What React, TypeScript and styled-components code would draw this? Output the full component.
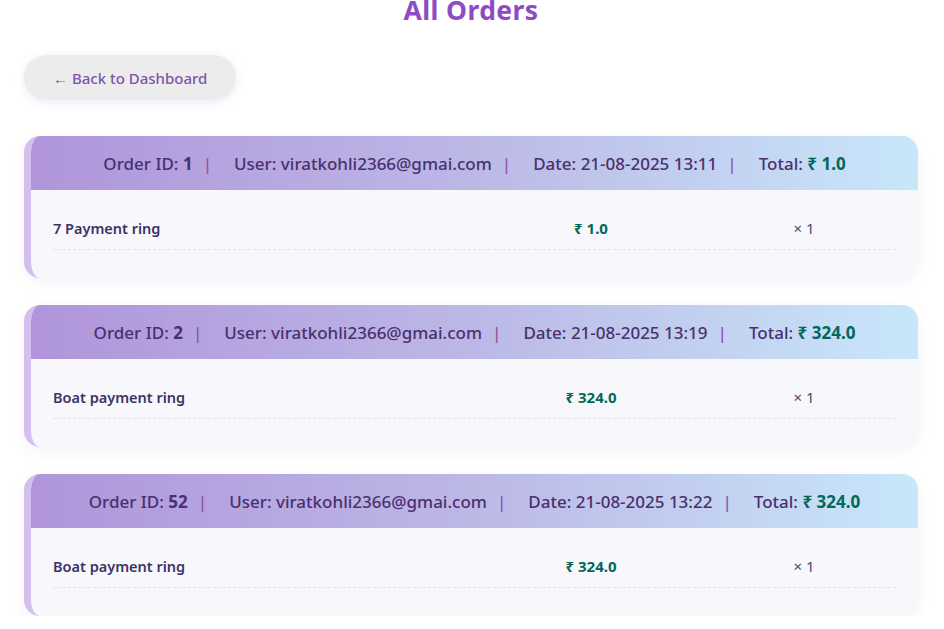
import React from "react";
import styled, { createGlobalStyle } from "styled-components";

const Global = createGlobalStyle`
  html, body { margin: 0; padding: 0; background: #ffffff; }
  body { font-family: "Noto Sans", "Open Sans", sans-serif; }
`;

const Page = styled.div`
  padding: 0 26px 0 24px;
`;

const Title = styled.h1`
  margin: -8px 0 0;
  text-align: center;
  font-size: 26.5px;
  font-weight: 700;
  color: #8e4cc4;
  letter-spacing: 0.4px;
`;

const BackButton = styled.button`
  margin-top: 27px;
  height: 45px;
  padding: 0 29px;
  border: none;
  border-radius: 23px;
  background: #ececec;
  color: #7d55a8;
  font-family: inherit;
  font-size: 15px;
  font-weight: 500;
  box-shadow: 0 2px 10px rgba(160, 130, 230, 0.18);
  cursor: pointer;
`;

const List = styled.div`
  margin-top: 36px;
  display: flex;
  flex-direction: column;
  gap: 27px;
`;

const Card = styled.div`
  border-left: 7px solid #d5bfee;
  border-radius: 16px;
  background: #f8f7fb;
  overflow: hidden;
  box-shadow: 0 4px 14px rgba(120, 100, 170, 0.08);
`;

const Header = styled.div`
  height: 54px;
  display: flex;
  align-items: center;
  justify-content: center;
  background: linear-gradient(90deg, #b095da 0%, #bcb8e6 50%, #c8e7fa 100%);
  color: #4b2f70;
  font-size: 17px;
  font-weight: 500;
  white-space: nowrap;
`;

const Sep = styled.span`
  color: #8a55ad;
  margin: 0 22px 0 10px;
`;

const Strong = styled.b`
  font-weight: 700;
`;

const Money = styled.b`
  color: #00695c;
  font-weight: 700;
`;

const Body = styled.div`
  padding: 17px 22px 28px;
`;

const Item = styled.div`
  display: grid;
  grid-template-columns: 1fr 130px 184px;
  column-gap: 56px;
  align-items: center;
  height: 42px;
  border-bottom: 1px dashed #e4e2ea;
  font-size: 14.5px;
`;

const Name = styled.span`
  color: #3b3468;
  font-weight: 600;
`;

const Price = styled.span`
  text-align: center;
  color: #00695c;
  font-weight: 700;
  font-size: 15px;
`;

const Qty = styled.span`
  text-align: center;
  color: #4b4870;
  font-size: 15px;
`;

const orders = [
  { id: 1, user: "viratkohli2366@gmai.com", date: "21-08-2025 13:11", total: "1.0", items: [{ name: "7 Payment ring", price: "1.0", qty: 1 }] },
  { id: 2, user: "viratkohli2366@gmai.com", date: "21-08-2025 13:19", total: "324.0", items: [{ name: "Boat payment ring", price: "324.0", qty: 1 }] },
  { id: 52, user: "viratkohli2366@gmai.com", date: "21-08-2025 13:22", total: "324.0", items: [{ name: "Boat payment ring", price: "324.0", qty: 1 }] },
];

export default function App() {
  return (
    <>
      <Global />
      <Page>
        <Title>All Orders</Title>
        <BackButton>← Back to Dashboard</BackButton>
        <List>
          {orders.map((o) => (
            <Card key={o.id}>
              <Header>
                <span>Order ID: <Strong>{o.id}</Strong></span>
                <Sep>|</Sep>
                <span>User: {o.user}</span>
                <Sep>|</Sep>
                <span>Date: {o.date}</span>
                <Sep>|</Sep>
                <span>Total: <Money>₹ {o.total}</Money></span>
              </Header>
              <Body>
                {o.items.map((it, i) => (
                  <Item key={i}>
                    <Name>{it.name}</Name>
                    <Price>₹ {it.price}</Price>
                    <Qty>× {it.qty}</Qty>
                  </Item>
                ))}
              </Body>
            </Card>
          ))}
        </List>
      </Page>
    </>
  );
}
